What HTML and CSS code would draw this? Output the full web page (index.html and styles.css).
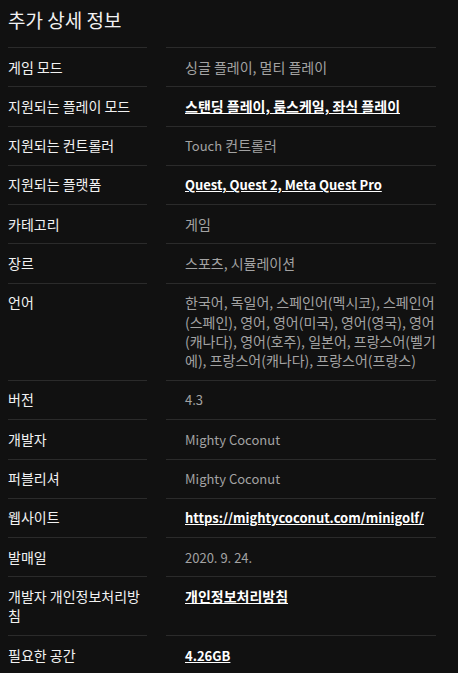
FILE: index.html
```html
<html>
<head>
    <meta charset="UTF-8">
    <meta name="viewport" content="width=device-width, initial-scale=1.0">
    <title>추가 상세 정보</title>
    <link rel="stylesheet" href="styles.css">
</head>
<body>
    <h2 class="title">추가 상세 정보</h2>
    <div class="details">
        <div class="label">게임 모드</div>
        <div class="value">싱글 플레이, 멀티 플레이</div>

        <div class="label">지원되는 플레이 모드</div>
        <div class="value"><a href="#">스탠딩 플레이, 룸스케일, 좌식 플레이</a></div>

        <div class="label">지원되는 컨트롤러</div>
        <div class="value"><span class="latin">Touch</span> 컨트롤러</div>

        <div class="label">지원되는 플랫폼</div>
        <div class="value latin"><a href="#">Quest, Quest 2, Meta Quest Pro</a></div>

        <div class="label">카테고리</div>
        <div class="value">게임</div>

        <div class="label">장르</div>
        <div class="value">스포츠, 시뮬레이션</div>

        <div class="label">언어</div>
        <div class="value">한국어, 독일어, 스페인어(멕시코), 스페인어(스페인), 영어, 영어(미국), 영어(영국), 영어(캐나다), 영어(호주), 일본어, 프랑스어(벨기에), 프랑스어(캐나다), 프랑스어(프랑스)</div>

        <div class="label">버전</div>
        <div class="value latin">4.3</div>

        <div class="label">개발자</div>
        <div class="value latin">Mighty Coconut</div>

        <div class="label">퍼블리셔</div>
        <div class="value latin">Mighty Coconut</div>

        <div class="label">웹사이트</div>
        <div class="value latin"><a href="#">https://mightycoconut.com/minigolf/</a></div>

        <div class="label">발매일</div>
        <div class="value latin">2020. 9. 24.</div>

        <div class="label">개발자 개인정보처리방침</div>
        <div class="value"><a href="#">개인정보처리방침</a></div>

        <div class="label">필요한 공간</div>
        <div class="value latin"><a href="#">4.26GB</a></div>
    </div>
</body>
</html>
```

FILE: styles.css
```css
body {
    background-color: #111111;
    margin: 0;
    padding: 8px;
    font-family: "Noto Sans CJK KR", "Noto Sans", sans-serif;
    color: #ffffff;
}

.title {
    font-size: 19px;
    font-weight: normal;
    line-height: 24px;
    margin: 0 0 15px 0;
    color: #f2f2f2;
}

.details {
    display: grid;
    grid-template-columns: 139px 270px;
    column-gap: 19px;
    font-size: 14px;
    line-height: 19.3px;
}

.label,
.value {
    border-top: 1px solid #2b2b2b;
    padding: 9.5px 0;
}

.label {
    color: #f2f2f2;
}

.value {
    color: #a3a3a3;
    padding-left: 19px;
}

.value a {
    color: #ffffff;
    font-weight: bold;
    text-decoration: underline;
}

/* latin runs are set a touch smaller to match the original's UI font */
.latin {
    font-size: 13px;
}
```
